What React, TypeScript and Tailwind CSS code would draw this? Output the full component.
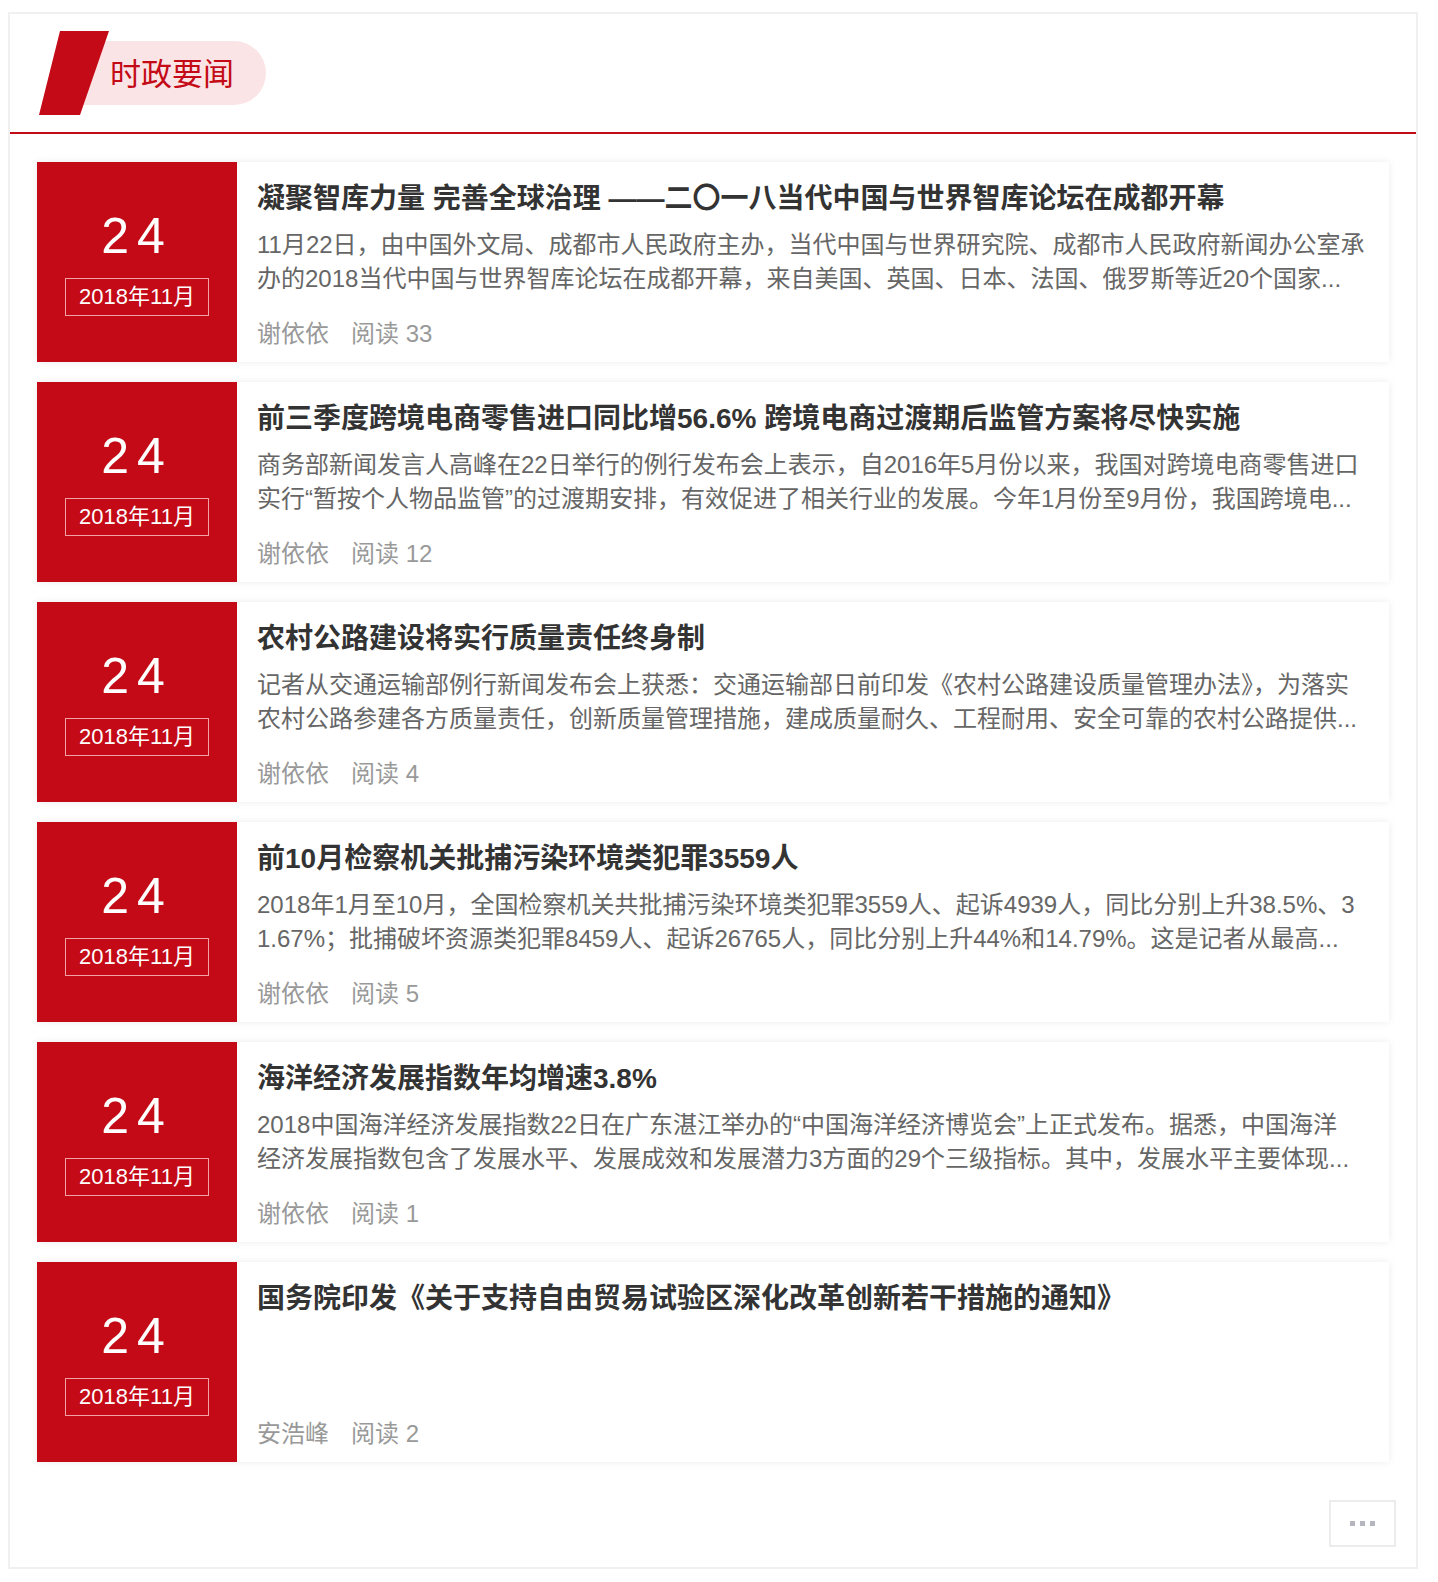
import React from "react";

type NewsItem = {
  day: string;
  month: string;
  title: string;
  lines: string[];
  author: string;
  reads: number;
};

const NEWS: NewsItem[] = [
  {
    day: "24",
    month: "2018年11月",
    title: "凝聚智库力量 完善全球治理 ——二〇一八当代中国与世界智库论坛在成都开幕",
    lines: [
      "11月22日，由中国外文局、成都市人民政府主办，当代中国与世界研究院、成都市人民政府新闻办公室承",
      "办的2018当代中国与世界智库论坛在成都开幕，来自美国、英国、日本、法国、俄罗斯等近20个国家...",
    ],
    author: "谢依依",
    reads: 33,
  },
  {
    day: "24",
    month: "2018年11月",
    title: "前三季度跨境电商零售进口同比增56.6% 跨境电商过渡期后监管方案将尽快实施",
    lines: [
      "商务部新闻发言人高峰在22日举行的例行发布会上表示，自2016年5月份以来，我国对跨境电商零售进口",
      "实行“暂按个人物品监管”的过渡期安排，有效促进了相关行业的发展。今年1月份至9月份，我国跨境电...",
    ],
    author: "谢依依",
    reads: 12,
  },
  {
    day: "24",
    month: "2018年11月",
    title: "农村公路建设将实行质量责任终身制",
    lines: [
      "记者从交通运输部例行新闻发布会上获悉：交通运输部日前印发《农村公路建设质量管理办法》，为落实",
      "农村公路参建各方质量责任，创新质量管理措施，建成质量耐久、工程耐用、安全可靠的农村公路提供...",
    ],
    author: "谢依依",
    reads: 4,
  },
  {
    day: "24",
    month: "2018年11月",
    title: "前10月检察机关批捕污染环境类犯罪3559人",
    lines: [
      "2018年1月至10月，全国检察机关共批捕污染环境类犯罪3559人、起诉4939人，同比分别上升38.5%、3",
      "1.67%；批捕破坏资源类犯罪8459人、起诉26765人，同比分别上升44%和14.79%。这是记者从最高...",
    ],
    author: "谢依依",
    reads: 5,
  },
  {
    day: "24",
    month: "2018年11月",
    title: "海洋经济发展指数年均增速3.8%",
    lines: [
      "2018中国海洋经济发展指数22日在广东湛江举办的“中国海洋经济博览会”上正式发布。据悉，中国海洋",
      "经济发展指数包含了发展水平、发展成效和发展潜力3方面的29个三级指标。其中，发展水平主要体现...",
    ],
    author: "谢依依",
    reads: 1,
  },
  {
    day: "24",
    month: "2018年11月",
    title: "国务院印发《关于支持自由贸易试验区深化改革创新若干措施的通知》",
    lines: [],
    author: "安浩峰",
    reads: 2,
  },
];

function NewsRow({ item }: { item: NewsItem }) {
  return (
    <li className="flex h-[200px] bg-white shadow-[0_0_8px_rgba(0,0,0,0.08)]">
      {/* Date block */}
      <div className="flex w-[200px] shrink-0 flex-col items-center bg-[#c30a16] text-white">
        <div className="mt-[51px] text-[50px] leading-[46px] tracking-[8px]">{item.day}</div>
        <div className="mt-[19px] flex h-[38px] w-[144px] items-center justify-center border border-[#f2a3a8] text-[22px] leading-none">
          {item.month}
        </div>
      </div>

      {/* Text */}
      <div className="flex min-w-0 flex-1 flex-col pl-[20px] pr-[20px] pt-[19px] pb-[11px]">
        <h3 className="whitespace-nowrap text-[28px] font-bold leading-[36px] text-[#333]">{item.title}</h3>
        {item.lines.length > 0 && (
          <div className="mt-[11px] text-[24px] leading-[34px] text-[#666]">
            {item.lines.map((line, i) => (
              <p key={i} className="overflow-hidden whitespace-nowrap">
                {line}
              </p>
            ))}
          </div>
        )}
        <div className="mt-auto flex text-[24px] leading-[34px] text-[#999]">
          <span>{item.author}</span>
          <span className="ml-[22px]">阅读 {item.reads}</span>
        </div>
      </div>
    </li>
  );
}

export default function App() {
  return (
    <div className="min-h-[1582px] bg-white pt-[12px] pl-[8px] font-['Liberation_Sans','Noto_Sans_CJK_SC',sans-serif]">
      <section className="w-[1410px] border-2 border-[#f0f0f0] bg-white">
        {/* Header */}
        <div className="flex h-[120px] items-center border-b-2 border-[#c30a16] pl-[29px]">
          <svg width="70" height="84" viewBox="0 0 70 84" className="relative z-10 shrink-0">
            <polygon points="21,0 70,0 41,84 0,84" fill="#c30a16" />
          </svg>
          <div className="-ml-[40px] flex h-[64px] items-center rounded-r-full bg-[#fbe4e5] pl-[41px] pr-[32px]">
            <span className="pt-[2px] text-[31px] leading-none text-[#c30a16]">时政要闻</span>
          </div>
        </div>

        {/* List */}
        <ul className="flex flex-col gap-[20px] px-[27px] pt-[28px]">
          {NEWS.map((item, i) => (
            <NewsRow key={i} item={item} />
          ))}
        </ul>

        {/* More */}
        <div className="flex justify-end px-[20px] pt-[38px] pb-[20px]">
          <button
            type="button"
            className="flex h-[47px] w-[67px] items-center justify-center gap-[5px] border-2 border-[#ececec] bg-white"
          >
            <span className="h-[5px] w-[5px] bg-[#b5b5bd]" />
            <span className="h-[5px] w-[5px] bg-[#b5b5bd]" />
            <span className="h-[5px] w-[5px] bg-[#b5b5bd]" />
          </button>
        </div>
      </section>
    </div>
  );
}
